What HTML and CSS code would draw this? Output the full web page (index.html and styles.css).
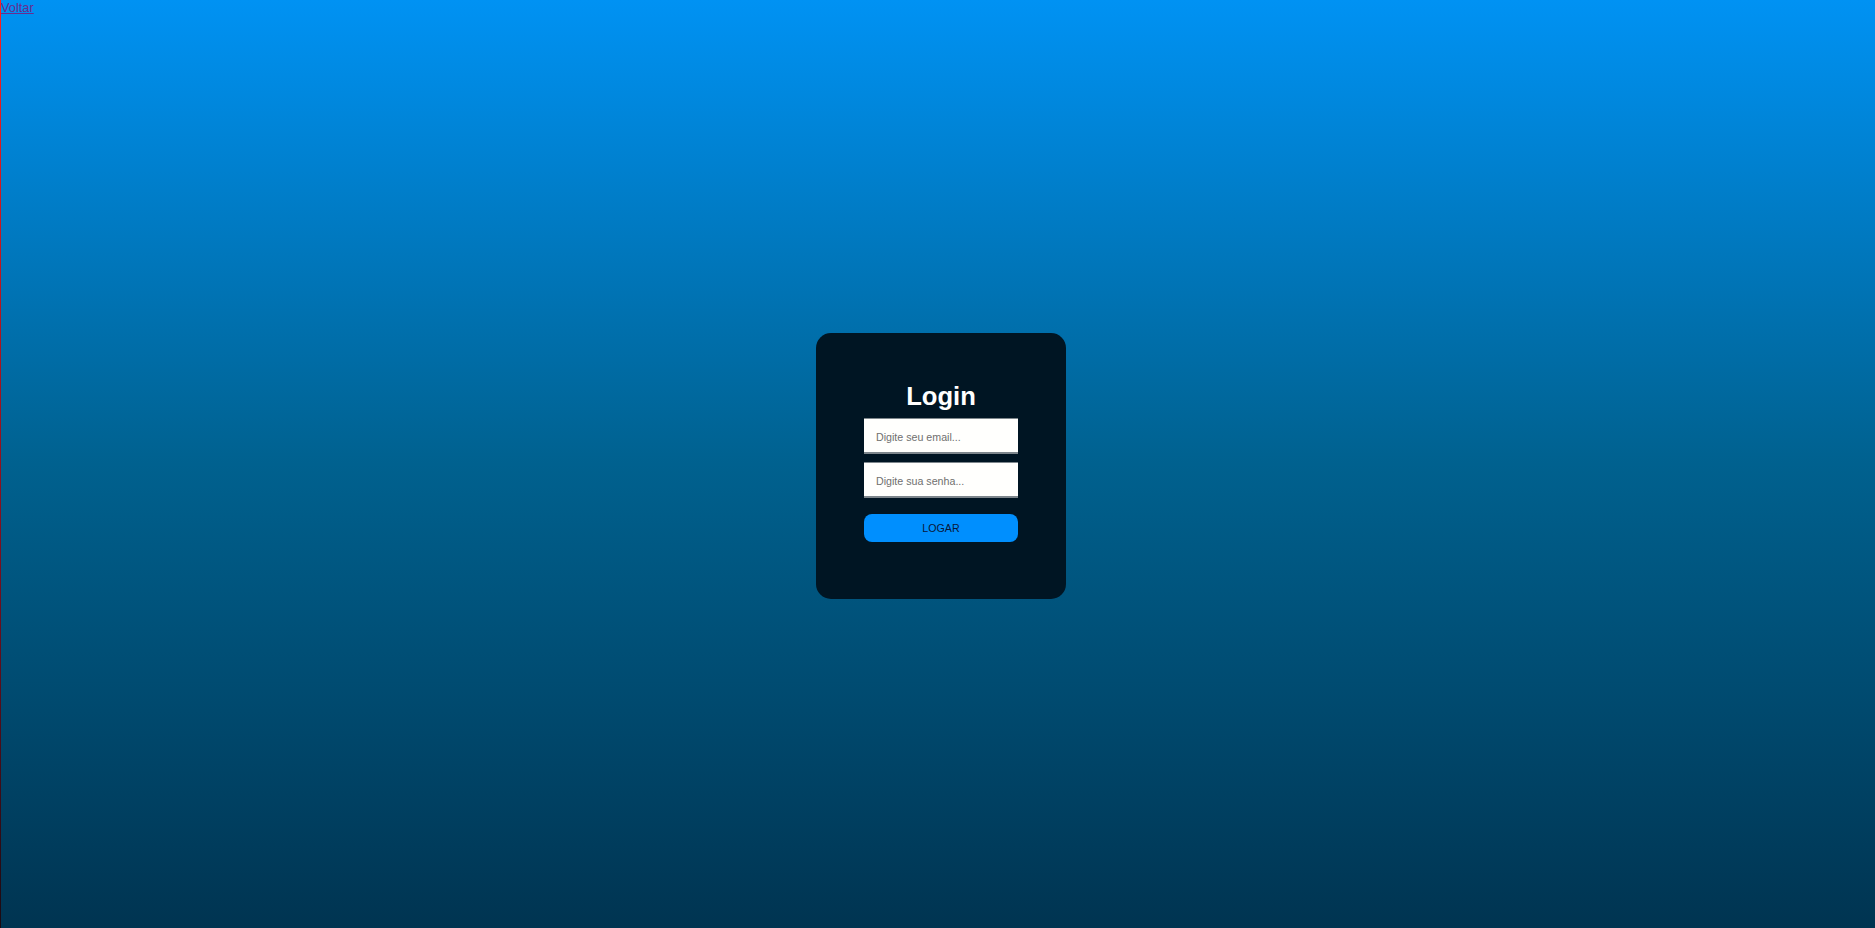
FILE: index.html
```html
<!DOCTYPE html>
<html lang="pt-br">
<head>
    <meta charset="UTF-8">
    <meta name="viewport" content="width=device-width, initial-scale=1.0">
    <title>Login</title>
    <link rel="stylesheet" href="styles.css">
</head>
<body>
    <a class="voltar" href="#">Voltar</a>

    <!-- Caixa de login -->
    <div class="page">
        <div class="box">
            <h1>Login</h1>
            <input type="text" placeholder="Digite seu email...">
            <input type="password" placeholder="Digite sua senha...">
            <button>LOGAR</button>
        </div>
    </div>
</body>
</html>
```

FILE: styles.css
```css
/* Estilo base */
body {
    font-family: 'Liberation Sans', Arial, Helvetica, sans-serif;
    margin: 0;
    min-height: 100vh;
    background: linear-gradient(to bottom, #0092f3, #00618f 50%, #003451);
    border-left: 1px solid;
    border-image: linear-gradient(to bottom, #ff1f1f, #7a1020 60%, #1a0a12) 1;
    display: flex;
    flex-direction: column;
}

.voltar {
    font-size: 12.8px;
    color: #6a2c8f;
    position: absolute;
    top: 0;
    left: 1px;
}

.page {
    flex: 1;
    display: flex;
    justify-content: center;
    align-items: center;
    padding-left: 6px;
    padding-top: 4px;
}

.box {
    background-color: #001523;
    width: 154px;
    padding: 49px 48px 57px;
    border-radius: 15px;
    display: flex;
    flex-direction: column;
    color: white;
}

h1 {
    font-size: 25.6px;
    text-align: center;
    margin: 0 0 7px;
    line-height: 29px;
}

input {
    font-family: 'Liberation Sans', Arial, sans-serif;
    font-size: 10.67px;
    height: 36px;
    box-sizing: border-box;
    padding: 3px 12px 0;
    border: none;
    border-top: 1px solid #7d868c;
    border-bottom: 2px solid #7d868c;
    background-color: #fffffd;
    outline: none;
    margin-bottom: 8px;
}

input::placeholder {
    color: #6f6f6f;
}

button {
    font-family: 'Liberation Sans', Arial, sans-serif;
    font-size: 10.67px;
    margin-top: 8px;
    height: 28px;
    background-color: #008ffe;
    color: #0a1638;
    border: none;
    border-radius: 8px;
    cursor: pointer;
}
```
